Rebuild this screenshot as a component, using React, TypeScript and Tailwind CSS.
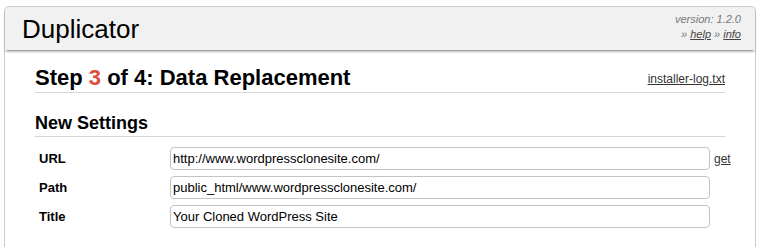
import React from "react";

const font = { fontFamily: '"Liberation Sans", Arial, sans-serif' };

function Row({ label, value, extra }: { label: string; value: string; extra?: React.ReactNode }) {
  return (
    <div className="flex items-center h-[23px]">
      <div className="w-[135px] shrink-0 pl-[4px] text-[13px] font-bold text-black">{label}</div>
      <input
        readOnly
        value={value}
        className="w-[540px] shrink-0 h-[23px] border border-[#c4c4c4] rounded-[4px] bg-white pl-[2px] text-[13px] text-black outline-none"
        style={font}
      />
      {extra}
    </div>
  );
}

export default function App() {
  return (
    <div className="bg-white w-[765px] h-[247px] overflow-hidden" style={font}>
      <div className="ml-[4px] mt-[6px] w-[752px] h-[241px] border border-b-0 border-[#cccccc] rounded-t-[5px] flex flex-col">
        <div className="relative z-10 h-[43px] bg-[#f1f1f1] rounded-t-[5px] flex justify-between shadow-[0_2px_3px_-1px_rgba(0,0,0,0.55)]">
          <div className="pl-[17px] pt-[7px] text-[26px] leading-[30px] text-black">Duplicator</div>
          <div className="pr-[14px] pt-[5px] text-right italic text-[11px] leading-[15px] text-[#777]">
            <div>version: 1.2.0</div>
            <div>
              » <span className="underline text-[#444]">help</span> » <span className="underline text-[#444]">info</span>
            </div>
          </div>
        </div>
        <div className="px-[30px] flex-1">
          <div className="pt-[15px] pb-[1px] border-b border-[#d6d6d6] flex items-center justify-between">
            <div className="text-[22px] leading-[26px] font-bold text-black">
              Step <span className="text-[#dd4b39]">3</span> of 4: Data Replacement
            </div>
            <span className="text-[12px] underline text-[#333] pt-[2px]">installer-log.txt</span>
          </div>
          <div className="mt-[20px] pb-[3px] border-b border-[#d6d6d6] text-[18px] leading-[20px] font-bold text-black">
            New Settings
          </div>
          <div className="mt-[10px] flex flex-col gap-[6px]">
            <Row
              label="URL"
              value="http://www.wordpressclonesite.com/"
              extra={<span className="ml-[4px] text-[12px] underline text-[#333]">get</span>}
            />
            <Row label="Path" value="public_html/www.wordpressclonesite.com/" />
            <Row label="Title" value="Your Cloned WordPress Site" />
          </div>
        </div>
      </div>
    </div>
  );
}
